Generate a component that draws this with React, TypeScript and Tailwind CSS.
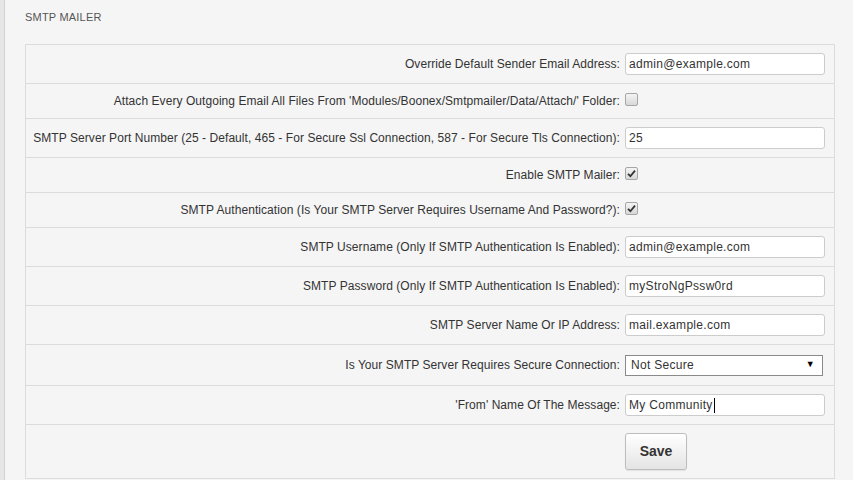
import React from "react";

type Row =
  | { label: string; kind: "text"; value: string; caret?: boolean }
  | { label: string; kind: "check"; checked: boolean }
  | { label: string; kind: "select"; value: string };

const rows: Row[] = [
  { label: "Override Default Sender Email Address:", kind: "text", value: "admin@example.com" },
  { label: "Attach Every Outgoing Email All Files From 'Modules/Boonex/Smtpmailer/Data/Attach/' Folder:", kind: "check", checked: false },
  { label: "SMTP Server Port Number (25 - Default, 465 - For Secure Ssl Connection, 587 - For Secure Tls Connection):", kind: "text", value: "25" },
  { label: "Enable SMTP Mailer:", kind: "check", checked: true },
  { label: "SMTP Authentication (Is Your SMTP Server Requires Username And Password?):", kind: "check", checked: true },
  { label: "SMTP Username (Only If SMTP Authentication Is Enabled):", kind: "text", value: "admin@example.com" },
  { label: "SMTP Password (Only If SMTP Authentication Is Enabled):", kind: "text", value: "myStroNgPssw0rd" },
  { label: "SMTP Server Name Or IP Address:", kind: "text", value: "mail.example.com" },
  { label: "Is Your SMTP Server Requires Secure Connection:", kind: "select", value: "Not Secure" },
  { label: "'From' Name Of The Message:", kind: "text", value: "My Community", caret: true },
];

const CheckBox = ({ checked }: { checked: boolean }) => (
  <span className="inline-flex h-[13px] w-[13px] items-center justify-center rounded-[2px] border border-[#a6a6a6] bg-gradient-to-b from-[#f4f4f4] to-[#d8d8d8]">
    {checked && (
      <svg width="9" height="9" viewBox="0 0 9 9">
        <path d="M1 4.8 L3.4 7.2 L8 1.6" fill="none" stroke="#333" strokeWidth="1.8" />
      </svg>
    )}
  </span>
);

const Control = ({ row }: { row: Row }) => {
  if (row.kind === "check") {
    return (
      <div className="flex h-[34px] items-start pt-[9px]">
        <CheckBox checked={row.checked} />
      </div>
    );
  }
  if (row.kind === "select") {
    return (
      <div className="flex h-[40px] items-center">
        <div className="flex h-[21px] w-[198px] items-center justify-between border border-[#8a8a8a] bg-white pl-[5px] pr-[7px] text-[12px] tracking-[0.3px] text-[#333]">
          <span>{row.value}</span>
          <span className="text-[9px] text-black">▼</span>
        </div>
      </div>
    );
  }
  return (
    <div className="flex h-[38px] items-center">
      <div className="flex h-[22px] w-[200px] items-center rounded-[3px] border border-[#cccccc] bg-white pl-[3px] text-[12px] tracking-[0.3px] text-[#333]">
        <span>{row.value}</span>
        {row.caret && <span className="ml-[1px] h-[15px] w-px bg-black" />}
      </div>
    </div>
  );
};

export default function App() {
  return (
    <div className="flex min-h-[480px] w-full bg-[#f5f5f5] font-['Liberation_Sans',Arial,sans-serif]">
      <div className="w-[5px] shrink-0 border-r border-[#d2d2d2] bg-[#e6e6e6]" />
      <main className="flex-1 pl-[20px] pr-[18px]">
        <h2 className="pt-[11px] text-[11px] leading-[13px] tracking-[0.2px] text-[#555]">SMTP MAILER</h2>
        <div className="mt-[20px] border border-[#dcdcdc]">
          {rows.map((row, i) => (
            <div key={i} className="flex border-b border-[#dcdcdc]">
              <div className="flex flex-1 items-center justify-end pr-[5px] text-right text-[12px] tracking-[0.06px] text-[#333]">
                {row.label}
              </div>
              <div className="w-[209px] shrink-0">
                <Control row={row} />
              </div>
            </div>
          ))}
          <div className="flex h-[53px]">
            <div className="flex-1" />
            <div className="w-[209px] shrink-0 pt-[8px]">
              <button className="h-[37px] w-[62px] rounded-[3px] border border-[#bdbdbd] bg-gradient-to-b from-white to-[#e4e4e4] text-[14px] font-bold text-[#333] shadow-[0_1px_1px_rgba(0,0,0,0.08)]">
                Save
              </button>
            </div>
          </div>
        </div>
      </main>
    </div>
  );
}
